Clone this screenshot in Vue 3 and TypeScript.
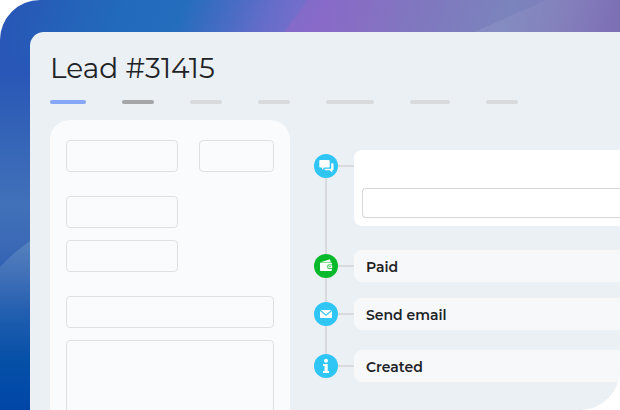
<script setup lang="ts">
type EventIcon = 'chat' | 'wallet' | 'mail' | 'info'

interface TimelineEvent {
  icon: EventIcon
  label?: string
  tone: 'sky' | 'green'
  spacing: 'large' | 'small' | 'medium' | 'none'
}

const tabs: { name: string; width: number; state?: string }[] = [
  { name: 'General', width: 36, state: 'active' },
  { name: 'Products', width: 32, state: 'strong' },
  { name: 'Quotes', width: 32 },
  { name: 'Invoices', width: 32 },
  { name: 'Automation', width: 48 },
  { name: 'Workflows', width: 40 },
  { name: 'History', width: 32 },
]

const events: TimelineEvent[] = [
  { icon: 'chat', tone: 'sky', spacing: 'large' },
  { icon: 'wallet', label: 'Paid', tone: 'green', spacing: 'small' },
  { icon: 'mail', label: 'Send email', tone: 'sky', spacing: 'medium' },
  { icon: 'info', label: 'Created', tone: 'sky', spacing: 'none' },
]
</script>

<template>
  <div class="desktop">
    <svg class="wallpaper" viewBox="0 0 620 410" preserveAspectRatio="none" aria-hidden="true">
      <defs>
        <linearGradient id="sky" gradientUnits="userSpaceOnUse" x1="0" y1="0" x2="534" y2="214">
          <stop offset="0" stop-color="#2954b6" />
          <stop offset=".1" stop-color="#2560b8" />
          <stop offset=".2" stop-color="#226abb" />
          <stop offset=".3" stop-color="#246dbd" />
          <stop offset=".37" stop-color="#446cc3" />
          <stop offset=".44" stop-color="#646dc9" />
          <stop offset=".49" stop-color="#746ecb" />
          <stop offset=".53" stop-color="#836bc8" />
          <stop offset=".6" stop-color="#8571c2" />
          <stop offset=".7" stop-color="#7f78bf" />
          <stop offset=".83" stop-color="#7b84bc" />
          <stop offset=".92" stop-color="#807cba" />
          <stop offset="1" stop-color="#7d70b5" />
        </linearGradient>
        <linearGradient id="side" x1="0" y1="0" x2="0" y2="1">
          <stop offset=".06" stop-color="#2855b7" stop-opacity="0" />
          <stop offset=".18" stop-color="#2957b7" />
          <stop offset=".37" stop-color="#3767b7" />
          <stop offset=".5" stop-color="#4171b9" />
          <stop offset=".6" stop-color="#3b69b6" />
          <stop offset=".66" stop-color="#2e60b2" />
        </linearGradient>
        <linearGradient id="hill" x1="0" y1="0" x2="0" y2="1">
          <stop offset="0" stop-color="#5582bf" />
          <stop offset=".2" stop-color="#4170b7" />
          <stop offset=".45" stop-color="#1f5daf" />
          <stop offset=".7" stop-color="#0650a7" />
          <stop offset="1" stop-color="#0046a8" />
        </linearGradient>
        <linearGradient id="ray" x1="0" y1="0" x2="1" y2="0">
          <stop offset="0" stop-color="#fff" stop-opacity=".1" />
          <stop offset="1" stop-color="#fff" stop-opacity="0" />
        </linearGradient>
        <linearGradient id="glow" x1="0" y1="0" x2="1" y2="0">
          <stop offset="0" stop-color="#9865c8" stop-opacity=".6" />
          <stop offset=".5" stop-color="#9068c8" stop-opacity=".3" />
          <stop offset="1" stop-color="#9068c8" stop-opacity="0" />
        </linearGradient>
      </defs>
      <path d="M0 0H620V50H50V410H0Z" fill="url(#sky)" />
      <path d="M308 0 284 32 270 50H400V0Z" fill="url(#glow)" />
      <path d="M547 0 474 32 440 50H620V0Z" fill="url(#ray)" />
      <rect width="30" height="410" fill="url(#side)" />
      <path d="M0 267Q14 252 30 241V410H0Z" fill="url(#hill)" />
    </svg>

    <main class="window">
      <h1 class="title">Lead #31415</h1>

      <nav class="tabs" aria-label="Lead sections">
        <button
          v-for="tab in tabs"
          :key="tab.name"
          type="button"
          class="tab"
          :class="tab.state"
          :style="{ width: tab.width + 'px' }"
          :aria-label="tab.name"
        ></button>
      </nav>

      <div class="columns">
        <form class="details" @submit.prevent>
          <div class="pair">
            <input class="field" type="text" aria-label="Name" />
            <input class="field" type="text" aria-label="Amount" />
          </div>
          <div class="group">
            <input class="field half" type="text" aria-label="Phone" />
            <input class="field half" type="text" aria-label="Email" />
          </div>
          <div class="group">
            <input class="field" type="text" aria-label="Address" />
            <textarea class="field notes" aria-label="Notes"></textarea>
          </div>
        </form>

        <ol class="timeline">
          <li v-for="event in events" :key="event.icon" class="event" :class="event.spacing">
            <div class="rail">
              <span class="marker" :class="event.tone">
                <svg v-if="event.icon === 'chat'" viewBox="0 0 24 24" aria-hidden="true">
                  <path d="M6.100 6h8.800q.8 0 .8.800v6q0 .8-.8.800H10.300l-2.300 2.400V13.600H6.100q-.8 0-.8-.8v-6q0-.8.800-.8Z" />
                  <path d="M17.200 9.200h1.400q.9 0 .9.900v5.400q0 .8-.8.800h-.4v2.100l-2.600-2.100h-4.300q-.8 0-.8-.8v-.7h5.700q.9 0 .9-.9Z" />
                </svg>
                <svg v-else-if="event.icon === 'wallet'" viewBox="0 0 24 24" aria-hidden="true">
                  <path d="M7.400 8 15.300 5.400q.6-.2.800.4l.5 2.200Z" />
                  <path d="M6.900 8.600H17q.9 0 .9.900v1.100h-3.400q-1.100 0-1.100 1.100v2q0 1.100 1.100 1.100h3.400v1.300q0 .9-.9.900H6.900q-.9 0-.9-.9V9.500q0-.9.900-.9Z" />
                  <path fill-rule="evenodd" d="M14.900 11.300h3.300v2.800h-3.300q-.7 0-.7-.7V12q0-.7.700-.7Zm.5.700v1.300h1.200V12Z" />
                </svg>
                <svg v-else-if="event.icon === 'mail'" viewBox="0 0 24 24" aria-hidden="true">
                  <path d="M6.700 8h10.600L12 12.400Z" />
                  <path d="M6 8.900 12 14l6-5.100v6.300q0 .8-.8.800H6.800Q6 16 6 15.200Z" />
                </svg>
                <svg v-else viewBox="0 0 24 24" aria-hidden="true">
                  <circle cx="12" cy="6.700" r="2" />
                  <path d="M9 10h4.700v6.900H15v2H9v-2h1.500v-4.900H9Z" />
                </svg>
              </span>
            </div>
            <div v-if="event.label" class="entry">{{ event.label }}</div>
            <div v-else class="entry composer">
              <input class="message" type="text" aria-label="Message" />
            </div>
          </li>
        </ol>
      </div>
    </main>
  </div>
</template>

<style>
body {
  margin: 0;
  background: #fff;
}
</style>

<style scoped>
.desktop,
.desktop * {
  box-sizing: border-box;
}

.desktop {
  position: relative;
  display: flex;
  height: 100vh;
  padding: 32px 0 0 30px;
  overflow: hidden;
  border-radius: 40px 0 40px 0;
  font-family: Montserrat, Inter, "Liberation Sans", sans-serif;
  color: #202226;
}

.wallpaper {
  position: absolute;
  inset: 0;
  width: 100%;
  height: 100%;
}

.window {
  position: relative;
  flex: 1;
  min-width: 0;
  padding: 16px 0 0 20px;
  overflow: hidden;
  border-radius: 14px 0 0 0;
  background: #ebf0f4;
}

.title {
  margin: 0;
  font-size: 28px;
  font-weight: 400;
  line-height: 40px;
}

.tabs {
  display: flex;
  gap: 36px;
  margin-top: 12px;
}

.tab {
  flex: none;
  height: 4px;
  padding: 0;
  border: 0;
  border-radius: 2px;
  background: #d9dadc;
}

.tab.active {
  background: #86a6f8;
}

.tab.strong {
  background: #a5a6a8;
}

.columns {
  display: flex;
  gap: 24px;
  margin-top: 16px;
}

.details {
  display: flex;
  flex: none;
  flex-direction: column;
  gap: 24px;
  width: 240px;
  padding: 20px 16px;
  border-radius: 20px;
  background: #fafbfd;
}

.pair {
  display: grid;
  grid-template-columns: 112px 1fr;
  gap: 21px;
}

.group {
  display: flex;
  flex-direction: column;
  gap: 12px;
}

.field,
.message {
  display: block;
  width: 100%;
  min-width: 0;
  height: 32px;
  padding: 0 8px;
  border: 1px solid #dfe0e3;
  border-radius: 4px;
  outline: 0;
  background: transparent;
  font: inherit;
  font-size: 14px;
}

.half {
  width: 112px;
}

.notes {
  height: 120px;
  resize: none;
}

.timeline {
  flex: 1;
  min-width: 0;
  margin: 0;
  padding: 30px 0 0;
  list-style: none;
}

.event {
  display: flex;
}

.rail {
  display: flex;
  flex: none;
  flex-direction: column;
  width: 40px;
  padding-top: 4px;
}

.rail::after {
  flex: 1;
  width: 2px;
  margin: 0 0 -4px 11px;
  background: #d8dadd;
  content: "";
}

.event:last-child .rail::after {
  display: none;
}

.marker {
  display: flex;
  align-items: center;
  width: 40px;
  height: 24px;
}

.marker::after {
  flex: 1;
  height: 2px;
  background: #d8dadd;
  content: "";
}

.marker svg {
  width: 24px;
  height: 24px;
  border-radius: 50%;
  fill: #fff;
}

.sky svg {
  background: #2fc6f6;
}

.green svg {
  background: #08ba2b;
}

.entry {
  flex: 1;
  min-width: 0;
  padding: 2px 12px 0;
  border-radius: 8px 0 0 8px;
  background: #f6f8fa;
  font-size: 14px;
  font-weight: 600;
  line-height: 30px;
}

.composer {
  padding: 38px 0 8px 8px;
  background: #fff;
}

.message {
  height: 30px;
  border-color: #d5d7da;
  border-right: 0;
  border-radius: 4px 0 0 4px;
}

.large .entry {
  margin-bottom: 24px;
}

.small .entry {
  margin-bottom: 16px;
}

.medium .entry {
  margin-bottom: 20px;
}
</style>
